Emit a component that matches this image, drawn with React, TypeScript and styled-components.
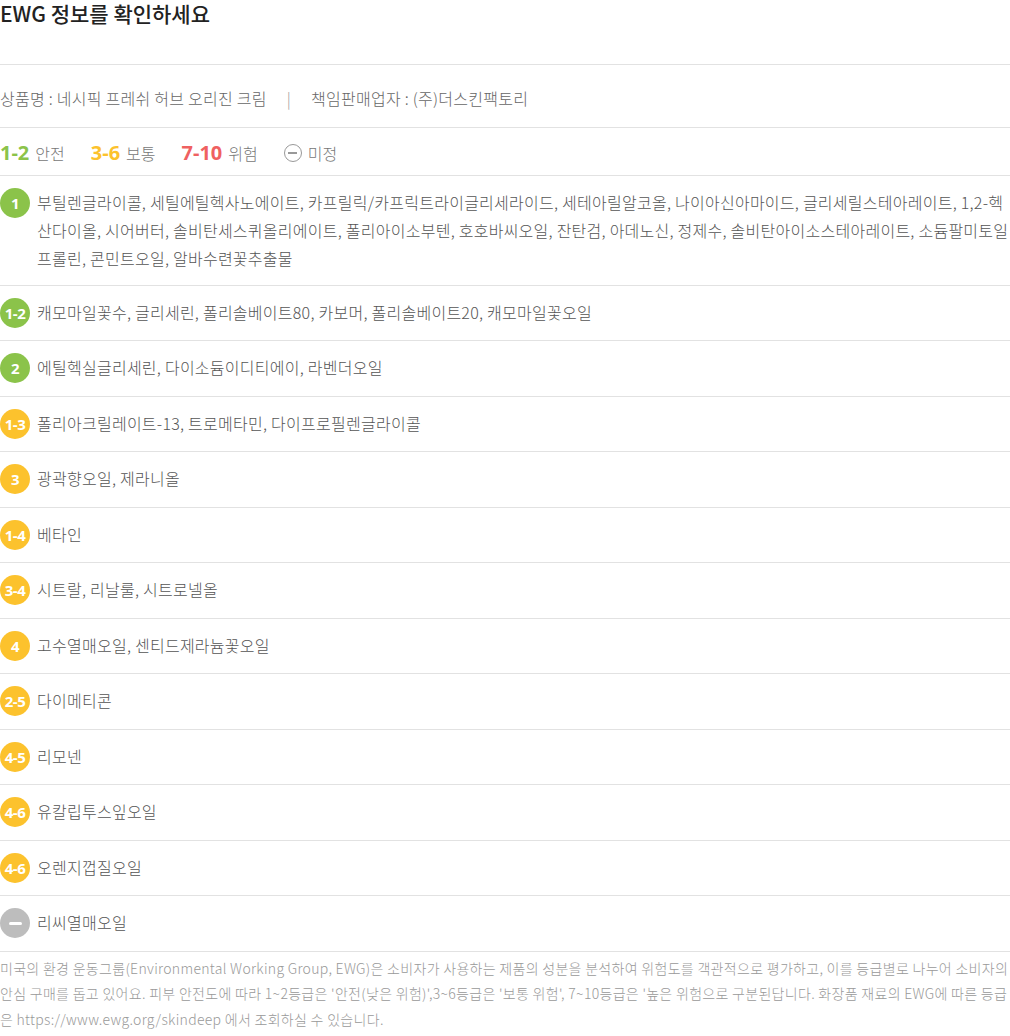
import React from 'react';
import styled, { createGlobalStyle } from 'styled-components';

const GlobalStyle = createGlobalStyle`
  body {
    margin: 0;
    background: #fff;
    font-family: 'Noto Sans CJK KR', 'Noto Sans', sans-serif;
  }
`;

const Wrapper = styled.div`
  width: 1010px;
  color: #555;
`;

const Title = styled.h2`
  margin: 0;
  height: 64px;
  font-size: 21px;
  line-height: 26px;
  font-weight: 500;
  color: #222;
`;

const InfoRow = styled.div`
  display: flex;
  align-items: center;
  gap: 20px;
  padding: 22px 0 18px;
  border-top: 1px solid #e2e2e2;
  font-size: 16px;
  line-height: 22px;
  font-weight: 300;
  letter-spacing: 0.26px;
  color: #666;
`;

const Divider = styled.span`
  color: #999;
`;

const Legend = styled.div`
  display: flex;
  align-items: center;
  gap: 26px;
  padding: 14px 0 11px;
  border-top: 1px solid #e2e2e2;
  font-size: 16px;
  line-height: 22px;
  font-weight: 300;
  color: #777;
`;

const LegendItem = styled.span`
  display: flex;
  align-items: center;
  gap: 6px;
`;

const LegendNum = styled.b<{ $color: string }>`
  font-family: 'Open Sans', sans-serif;
  font-weight: 700;
  font-size: 20px;
  color: ${(p) => p.$color};
`;

const UnknownIcon = styled.span`
  width: 16px;
  height: 16px;
  border: 1.5px solid #999;
  border-radius: 50%;
  display: flex;
  align-items: center;
  justify-content: center;
  &::after {
    content: '';
    width: 9px;
    height: 1.5px;
    background: #999;
  }
`;

const List = styled.ul`
  list-style: none;
  margin: 0;
  padding: 0;
`;

const Row = styled.li`
  display: flex;
  align-items: flex-start;
  gap: 7px;
  padding: 12.25px 0;
  border-top: 1px solid #e2e2e2;
`;

const Badge = styled.span<{ $color: string }>`
  flex: none;
  width: 30px;
  height: 30px;
  border-radius: 50%;
  background: ${(p) => p.$color};
  color: #fff;
  display: flex;
  align-items: center;
  justify-content: center;
  font-family: 'Open Sans', sans-serif;
  font-weight: 700;
  font-size: 15px;
  letter-spacing: -0.5px;
  white-space: nowrap;
`;

const Dash = styled.span`
  width: 13px;
  height: 3px;
  border-radius: 2px;
  background: #fff;
`;

const Names = styled.p`
  margin: 0;
  flex: 1;
  font-size: 16px;
  line-height: 28px;
  font-weight: 300;
  letter-spacing: 0.26px;
  color: #555;
`;

const Note = styled.p`
  margin: 0;
  padding-top: 4px;
  border-top: 1px solid #e2e2e2;
  font-size: 14px;
  line-height: 25.5px;
  font-weight: 300;
  letter-spacing: 0.3px;
  color: #999;
`;

const GREEN = '#8bc34a';
const YELLOW = '#fcc22d';
const RED = '#ef6161';
const GRAY = '#bdbdbd';

const ingredients = [
  {
    grade: '1',
    color: GREEN,
    names:
      '부틸렌글라이콜, 세틸에틸헥사노에이트, 카프릴릭/카프릭트라이글리세라이드, 세테아릴알코올, 나이아신아마이드, 글리세릴스테아레이트, 1,2-헥산다이올, 시어버터, 솔비탄세스퀴올리에이트, 폴리아이소부텐, 호호바씨오일, 잔탄검, 아데노신, 정제수, 솔비탄아이소스테아레이트, 소듐팔미토일프롤린, 콘민트오일, 알바수련꽃추출물',
  },
  { grade: '1-2', color: GREEN, names: '캐모마일꽃수, 글리세린, 폴리솔베이트80, 카보머, 폴리솔베이트20, 캐모마일꽃오일' },
  { grade: '2', color: GREEN, names: '에틸헥실글리세린, 다이소듐이디티에이, 라벤더오일' },
  { grade: '1-3', color: YELLOW, names: '폴리아크릴레이트-13, 트로메타민, 다이프로필렌글라이콜' },
  { grade: '3', color: YELLOW, names: '광곽향오일, 제라니올' },
  { grade: '1-4', color: YELLOW, names: '베타인' },
  { grade: '3-4', color: YELLOW, names: '시트랄, 리날룰, 시트로넬올' },
  { grade: '4', color: YELLOW, names: '고수열매오일, 센티드제라늄꽃오일' },
  { grade: '2-5', color: YELLOW, names: '다이메티콘' },
  { grade: '4-5', color: YELLOW, names: '리모넨' },
  { grade: '4-6', color: YELLOW, names: '유칼립투스잎오일' },
  { grade: '4-6', color: YELLOW, names: '오렌지껍질오일' },
  { grade: '', color: GRAY, names: '리씨열매오일' },
];

const App = () => {
  return (
    <Wrapper>
      <GlobalStyle />
      <Title>EWG 정보를 확인하세요</Title>
      <InfoRow>
        <span>상품명 : 네시픽 프레쉬 허브 오리진 크림</span>
        <Divider>|</Divider>
        <span>책임판매업자 : (주)더스킨팩토리</span>
      </InfoRow>
      <Legend>
        <LegendItem>
          <LegendNum $color={GREEN}>1-2</LegendNum>안전
        </LegendItem>
        <LegendItem>
          <LegendNum $color={YELLOW}>3-6</LegendNum>보통
        </LegendItem>
        <LegendItem>
          <LegendNum $color={RED}>7-10</LegendNum>위험
        </LegendItem>
        <LegendItem>
          <UnknownIcon />미정
        </LegendItem>
      </Legend>
      <List>
        {ingredients.map(({ grade, color, names }, i) => (
          <Row key={i}>
            <Badge $color={color}>{grade || <Dash />}</Badge>
            <Names>{names}</Names>
          </Row>
        ))}
      </List>
      <Note>
        미국의 환경 운동그룹(Environmental Working Group, EWG)은 소비자가 사용하는 제품의 성분을 분석하여 위험도를 객관적으로 평가하고, 이를 등급별로 나누어 소비자의 안심 구매를 돕고 있어요. 피부 안전도에 따라 1~2등급은 '안전(낮은 위험)',3~6등급은 '보통 위험', 7~10등급은 '높은 위험으로 구분된답니다. 화장품 재료의 EWG에 따른 등급은 https://www.ewg.org/skindeep 에서 조회하실 수 있습니다.
      </Note>
    </Wrapper>
  );
};

export default App;
